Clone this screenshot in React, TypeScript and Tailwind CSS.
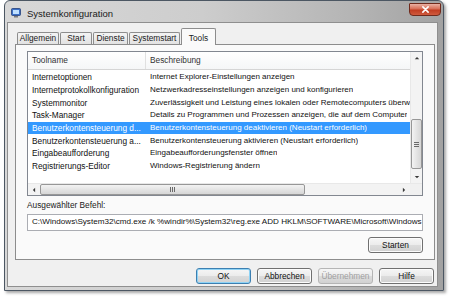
const rows: [string, string][] = [
  ["Internetoptionen", "Internet Explorer-Einstellungen anzeigen"],
  ["Internetprotokollkonfiguration", "Netzwerkadresseinstellungen anzeigen und konfigurieren"],
  ["Systemmonitor", "Zuverlässigkeit und Leistung eines lokalen oder Remotecomputers überw"],
  ["Task-Manager", "Details zu Programmen und Prozessen anzeigen, die auf dem Computer"],
  ["Benutzerkontensteuerung d...", "Benutzerkontensteuerung deaktivieren (Neustart erforderlich)"],
  ["Benutzerkontensteuerung a...", "Benutzerkontensteuerung aktivieren (Neustart erforderlich)"],
  ["Eingabeaufforderung", "Eingabeaufforderungsfenster öffnen"],
  ["Registrierungs-Editor", "Windows-Registrierung ändern"],
];

const tabs = [
  { label: "Allgemein", w: "w-[42px]" },
  { label: "Start", w: "w-[32px]" },
  { label: "Dienste", w: "w-[35px]" },
  { label: "Systemstart", w: "w-[51px]" },
];

function Btn({ label, primary, disabled }: { label: string; primary?: boolean; disabled?: boolean }) {
  return (
    <div
      className={`w-[55px] h-[16px] rounded-[3px] border flex items-center justify-center text-[8.3px] bg-[linear-gradient(to_bottom,#f6f6f6_0%,#ececec_48%,#dcdcdc_52%,#d2d2d2_100%)] ${
        primary
          ? "border-[#3c7fb1] shadow-[inset_0_0_0_1px_#8fd3f5]"
          : disabled
            ? "border-[#b5b5b5]"
            : "border-[#707070] shadow-[inset_0_0_0_1px_#fcfcfc]"
      } ${disabled ? "text-[#a0a0a0] bg-[#f4f4f4]" : "text-[#111]"}`}
    >
      {label}
    </div>
  );
}

function Arrow({ dir }: { dir: "up" | "down" | "left" | "right" }) {
  const pts = {
    up: "1,4 4,1 7,4",
    down: "1,1 4,4 7,1",
    left: "4,1 1,4 4,7",
    right: "1,1 4,4 1,7",
  }[dir];
  const vb = dir === "up" || dir === "down" ? "0 0 8 5" : "0 0 5 8";
  const size = dir === "up" || dir === "down" ? "w-[6px] h-[4px]" : "w-[4px] h-[6px]";
  return (
    <svg viewBox={vb} className={size}>
      <polygon points={pts} fill="#3a3a3a" />
    </svg>
  );
}

export default function App() {
  return (
    <div className="w-[450px] h-[299px] bg-white pl-[4px] overflow-hidden font-['Liberation_Sans',Arial,sans-serif]">
      <div className="w-[440px] h-[291px] rounded-t-[6px] border border-[#4c5763] bg-[linear-gradient(90deg,#d8d8d8_0%,#cdcdcd_45%,#b4b4b4_80%,#a2a2a2_100%)] shadow-[2px_2px_3px_rgba(0,0,0,0.35)] flex flex-col">
        <div className="h-[21px] flex items-start shrink-0">
          <div className="pl-[6px] pt-[7px]">
            <svg viewBox="0 0 10 10" className="w-[10px] h-[10px]">
              <rect x="0.5" y="0.5" width="9" height="7" rx="1" fill="#3b6fc6" stroke="#24407a" strokeWidth="0.8" />
              <rect x="2" y="2" width="6" height="4" fill="#bfe0ff" />
              <rect x="3" y="8" width="4" height="1.5" fill="#7a7a7a" />
            </svg>
          </div>
          <div className="pl-[6px] pt-[6px] text-[9.5px] text-[#1a1a1a] leading-[13px]">Systemkonfiguration</div>
          <div className="flex-1" />
          <div className="mt-[2px] mr-[2px] w-[32px] h-[13px] rounded-b-[4px] rounded-t-[1px] border border-[#702a1c] bg-[linear-gradient(to_bottom,#eab1a3_0%,#d86d55_45%,#c13d22_55%,#cf5a3d_100%)] flex items-center justify-center">
            <svg viewBox="0 0 10 8" className="w-[9px] h-[7px]">
              <path d="M2 1 L8 7 M8 1 L2 7" stroke="#ffffff" strokeWidth="1.8" strokeLinecap="round" />
            </svg>
          </div>
        </div>
        <div className="ml-[2px] mr-[5px] h-[265px] bg-[#f0f0f0] border border-[#8f8f8f] flex flex-col">
          <div className="h-[21px] pl-[9px] flex items-end">
            {tabs.map((t) => (
              <div
                key={t.label}
                className={`${t.w} h-[12px] mr-[1px] border border-b-0 border-[#8d8d8d] rounded-t-[2px] bg-[linear-gradient(to_bottom,#f4f4f4,#e2e2e2)] flex items-center justify-center text-[8.3px] text-[#1a1a1a]`}
              >
                {t.label}
              </div>
            ))}
            <div className="w-[35px] h-[17px] -mb-[1px] relative z-10 border border-b-0 border-[#8d8d8d] rounded-t-[2px] bg-[#fafafa] flex items-start pt-[3px] justify-center text-[8.3px] text-[#1a1a1a]">
              Tools
            </div>
          </div>
          <div className="ml-[7px] mr-[2px] h-[216px] border border-[#8d8d8d] bg-[#fafafa] px-[11px] pt-[6px] flex flex-col">
            <div className="h-[145px] border border-[#828790] bg-white flex flex-col">
              <div className="flex flex-1">
                <div className="flex-1 flex flex-col overflow-hidden">
                  <div className="h-[18px] flex border-b border-[#d5d5d5] bg-[linear-gradient(to_bottom,#ffffff,#f5f6f7)] text-[8.3px] text-[#333]">
                    <div className="w-[118px] pl-[4px] flex items-center border-r border-[#e0e0e0]">Toolname</div>
                    <div className="flex-1 pl-[4px] flex items-center">Beschreibung</div>
                  </div>
                  <div className="pt-[1px]">
                    {rows.map(([name, desc], i) => (
                      <div
                        key={name}
                        className={`h-[12.7px] flex items-center text-[8.3px] whitespace-nowrap ${
                          i === 4 ? "bg-[#3399ff] text-white" : "text-[#111]"
                        }`}
                      >
                        <div className="w-[118px] pl-[4px] overflow-hidden shrink-0">{name}</div>
                        <div className="pl-[4px] overflow-hidden text-[8px]">{desc}</div>
                      </div>
                    ))}
                  </div>
                </div>
                <div className="w-[12px] bg-[#f3f3f3] border-l border-[#e8e8e8] flex flex-col items-center">
                  <div className="h-[12px] flex items-center justify-center">
                    <Arrow dir="up" />
                  </div>
                  <div className="flex-1 w-full relative">
                    <div className="absolute left-[0px] right-[0px] top-[55px] h-[50px] rounded-[2px] border border-[#979797] bg-[linear-gradient(90deg,#f3f3f3,#e4e4e4_50%,#d6d6d6)] flex flex-col items-center justify-center gap-[1px]">
                      <div className="w-[5px] h-[1px] bg-[#6a6a6a]" />
                      <div className="w-[5px] h-[1px] bg-[#6a6a6a]" />
                      <div className="w-[5px] h-[1px] bg-[#6a6a6a]" />
                    </div>
                  </div>
                  <div className="h-[12px] flex items-center justify-center">
                    <Arrow dir="down" />
                  </div>
                </div>
              </div>
              <div className="h-[12px] flex bg-[#f3f3f3] border-t border-[#e8e8e8]">
                <div className="w-[12px] flex items-center justify-center">
                  <Arrow dir="left" />
                </div>
                <div className="flex-1 relative">
                  <div className="absolute left-0 top-0 bottom-0 w-[265px] rounded-[2px] border border-[#979797] bg-[linear-gradient(to_bottom,#f3f3f3,#e4e4e4_50%,#d6d6d6)] flex items-center justify-center gap-[1px]">
                    <div className="w-[1px] h-[5px] bg-[#6a6a6a]" />
                    <div className="w-[1px] h-[5px] bg-[#6a6a6a]" />
                    <div className="w-[1px] h-[5px] bg-[#6a6a6a]" />
                  </div>
                </div>
                <div className="w-[12px] flex items-center justify-center">
                  <Arrow dir="right" />
                </div>
                <div className="w-[12px] bg-[#f0f0f0]" />
              </div>
            </div>
            <div className="mt-[4px] h-[11px] text-[8.3px] text-[#222] leading-[11px]">Ausgewählter Befehl:</div>
            <div className="mt-[3px] h-[17px] border border-[#abadb3] bg-white pl-[4px] flex items-center text-[8.1px] text-[#111] whitespace-nowrap overflow-hidden">
              C:\Windows\System32\cmd.exe /k %windir%\System32\reg.exe ADD HKLM\SOFTWARE\Microsoft\Windows
            </div>
            <div className="mt-[6px] flex justify-end">
              <Btn label="Starten" />
            </div>
          </div>
          <div className="mt-[8px] mr-[3px] flex justify-end gap-[6px]">
            <Btn label="OK" primary />
            <Btn label="Abbrechen" />
            <Btn label="Übernehmen" disabled />
            <Btn label="Hilfe" />
          </div>
        </div>
      </div>
    </div>
  );
}
